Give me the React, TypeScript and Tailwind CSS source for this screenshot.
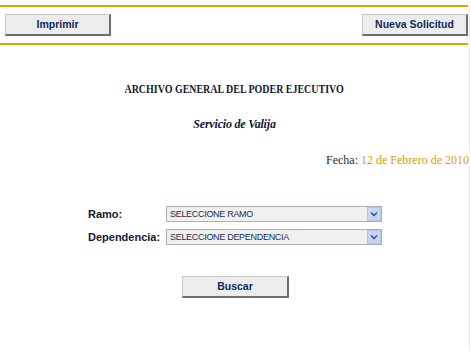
import React from "react";

const sans = { fontFamily: '"Liberation Sans", Arial, sans-serif' };
const serif = { fontFamily: '"Liberation Serif", "Times New Roman", serif' };

function Btn({ label, w }: { label: string; w: string }) {
  return (
    <div
      className={`${w} h-[22px] flex items-center justify-center bg-[#ececec] border border-t-[#c8c8c8] border-l-[#c8c8c8] border-r-[#6e6e6e] border-b-[#6e6e6e] border-r-2 border-b-2 text-[10.5px] font-bold text-[#10295a]`}
      style={sans}
    >
      {label}
    </div>
  );
}

function FakeSelect({ text }: { text: string }) {
  return (
    <div className="w-[216px] h-[16px] flex items-center border border-[#a9b2bf] bg-[#efefef]">
      <span
        className="flex-1 pl-[3px] text-[9px] tracking-[-0.3px] text-[#1c2f5e] leading-none"
        style={sans}
      >
        {text}
      </span>
      <div className="w-[14px] h-[14px] bg-[#c9d6f2] border border-[#b4c4e6] flex items-center justify-center">
        <svg width="8" height="6" viewBox="0 0 8 6">
          <polyline points="1,1.5 4,4.5 7,1.5" fill="none" stroke="#3b5590" strokeWidth="1.6" />
        </svg>
      </div>
    </div>
  );
}

export default function App() {
  return (
    <div className="w-[470px] h-[351px] bg-white overflow-hidden">
      <div className="w-[470px] h-[351px] border-r border-[#ededed] flex flex-col">
        <div className="h-[5px]" />
        <div className="h-[2px] w-[468px] bg-[#d9a400]" />
        <div className="h-[36px] w-[468px] flex items-center justify-between pl-[5px]">
          <Btn label="Imprimir" w="w-[106px]" />
          <Btn label="Nueva Solicitud" w="w-[106px]" />
        </div>
        <div className="h-[2px] w-[468px] bg-[#d9a400]" />

        <div className="mt-[37px] flex justify-center">
          <span
            className="inline-block scale-x-[0.83] whitespace-nowrap text-[12px] font-bold text-[#111a33] leading-[14px]"
            style={serif}
          >
            ARCHIVO GENERAL DEL PODER EJECUTIVO
          </span>
        </div>
        <div
          className="mt-[21px] text-center text-[12px] font-bold italic tracking-[-0.2px] text-[#111a33] leading-[14px]"
          style={serif}
        >
          Servicio de Valija
        </div>
        <div className="mt-[22px] text-right text-[12px] leading-[14px] text-[#1b2a4a]" style={serif}>
          Fecha: <span className="text-[#d69f00]">12 de Febrero de 2010</span>
        </div>

        <div className="mt-[39px] flex flex-col gap-[7px] pl-[88px]">
          <div className="flex items-center">
            <span className="w-[78px] text-[11px] leading-[16px] font-bold text-[#111a33]" style={sans}>
              Ramo:
            </span>
            <FakeSelect text="SELECCIONE RAMO" />
          </div>
          <div className="flex items-center">
            <span className="w-[78px] text-[11px] leading-[16px] font-bold text-[#111a33]" style={sans}>
              Dependencia:
            </span>
            <FakeSelect text="SELECCIONE DEPENDENCIA" />
          </div>
        </div>

        <div className="mt-[31px] pl-[182px]">
          <Btn label="Buscar" w="w-[107px]" />
        </div>
      </div>
    </div>
  );
}
